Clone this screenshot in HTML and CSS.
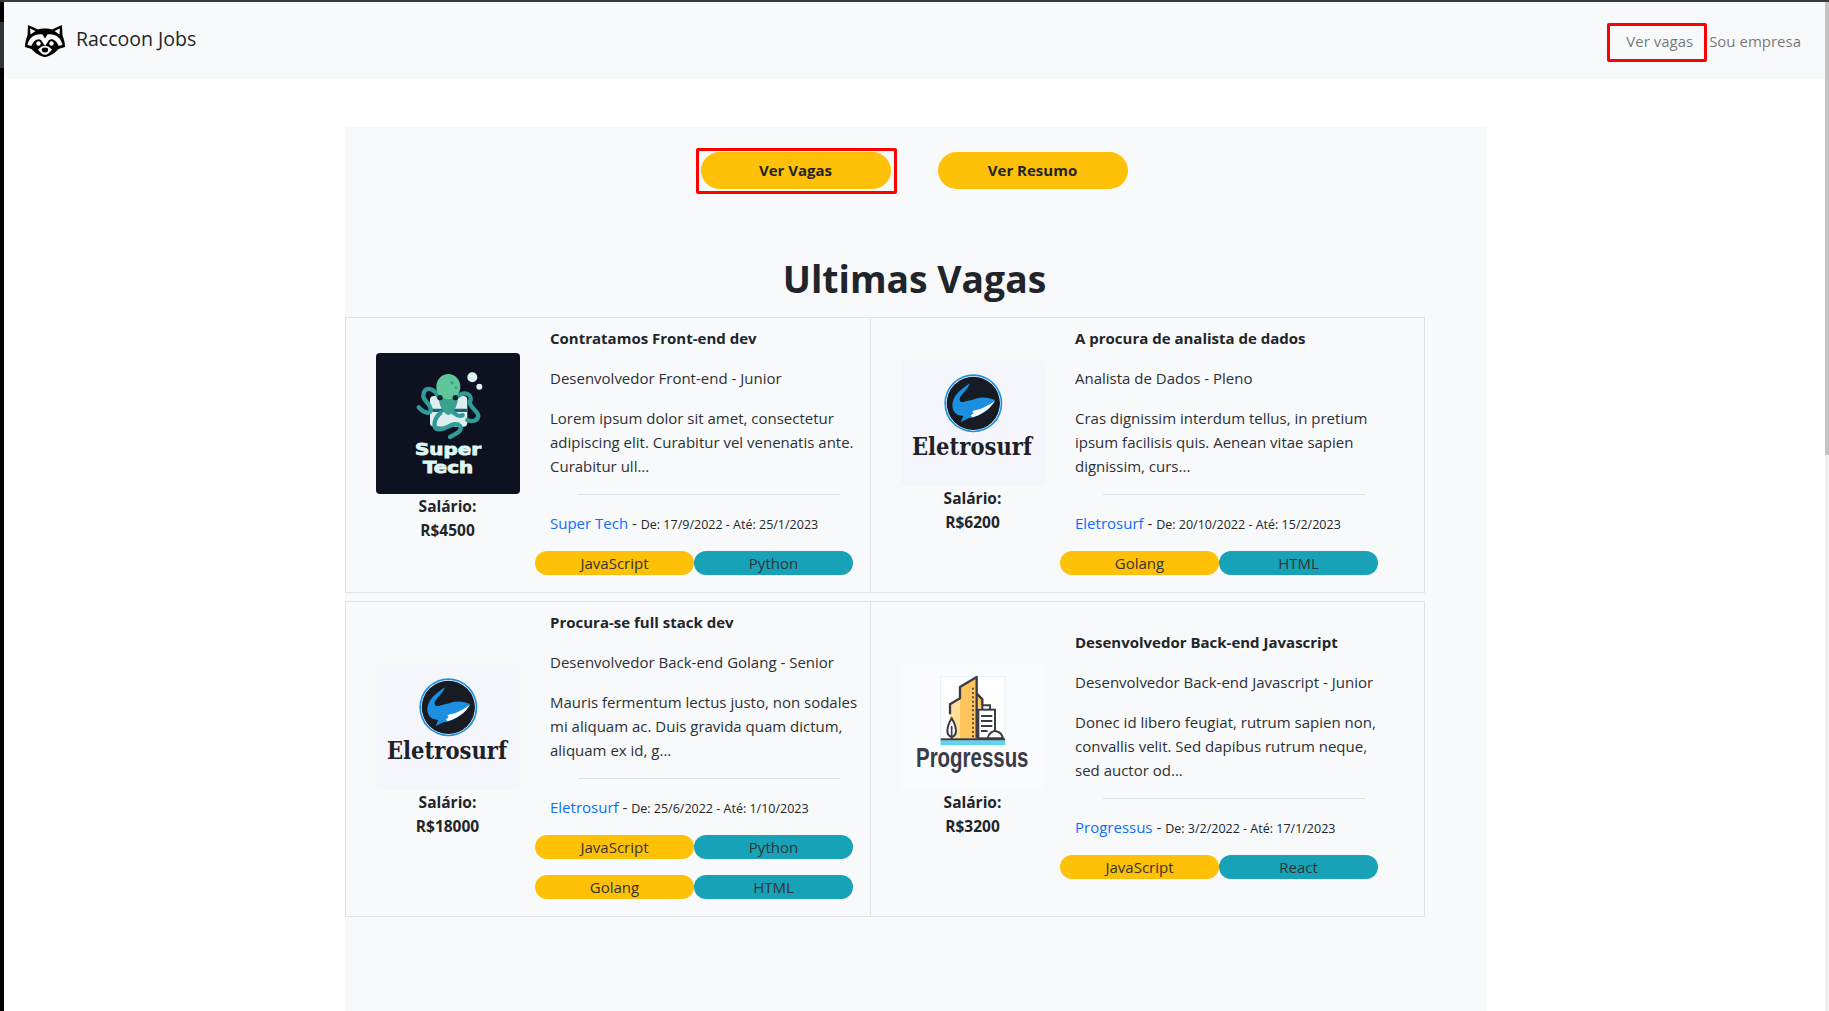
FILE: index.html
```html
<!DOCTYPE html>
<html lang="pt-BR">
<head>
    <meta charset="UTF-8">
    <meta name="viewport" content="width=device-width, initial-scale=1.0">
    <title>Raccoon Jobs</title>
    <link rel="stylesheet" href="styles.css">
</head>
<body>
    <svg class="sprite" xmlns="http://www.w3.org/2000/svg">
        <symbol id="logo-eletrosurf" viewBox="0 0 144 126">
            <rect width="144" height="126" rx="5" fill="#f5f6fb"/>
            <g transform="scale(.3333) translate(-18,-12)">
                <circle cx="235" cy="142" r="87" fill="#1c8fe0"/>
                <circle cx="235" cy="142" r="82" fill="#fff"/>
                <circle cx="235" cy="142" r="80" fill="#171b24"/>
                <path fill="#1c8fe0" d="M225 82C210 92 190 105 178 125C168 145 170 167 190 177L205 180L197 198L222 186L232 185C258 178 288 160 300 132C282 124 262 122 246 127C232 133 218 134 208 137C194 142 190 130 198 120C207 108 218 100 225 82Z"/>
                <path fill="#fff" d="M300 134C285 160 258 176 232 184L228 178L236 172L232 165L254 160C268 154 285 146 300 134Z"/>
            </g>
            <text class="logo-slab" x="11" y="95" textLength="120" lengthAdjust="spacingAndGlyphs">Eletrosurf</text>
        </symbol>
    </svg>

    <div class="left-edge"></div>

    <div class="page">
        <nav class="navbar">
            <a class="brand" href="#">
                <svg class="brand-logo" viewBox="0 0 40 32">
                    <path fill="#000" d="M3 0L13 4.500C17 3.300 23 3.300 27 4.500L37 0L37.500 10.500C39 14 40 18 40 22L33.500 24C30 28 25 31.500 20 32C15 31.500 10 28 6.500 24L0 22C0 18 1 14 2.500 10.500Z"/>
                    <path fill="#fff" d="M5 3.500L10.500 6L5.500 9.500ZM35 3.500L29.500 6L34.500 9.500Z"/>
                    <path fill="#fff" d="M2.500 20C4 12 11 8 17.500 9.500L20 13.500L22.500 9.500C29 8 36 12 37.500 20L33.500 20.800C31.500 15 27 13 24 15L20 21L16 15C13 13 8.500 15 6.500 20.800Z"/>
                    <path fill="#fff" d="M15.500 22.500C17 20.500 23 20.500 24.500 22.500L27 24.500C25 27.500 22.500 29.800 20 29.800C17.500 29.800 15 27.500 13 24.500Z"/>
                    <circle cx="13.500" cy="18.500" r="2.200" fill="#fff"/>
                    <circle cx="26.500" cy="18.500" r="2.200" fill="#fff"/>
                    <ellipse cx="20" cy="25" rx="3.200" ry="2.400" fill="#000"/>
                </svg>
                <span class="brand-name">Raccoon Jobs</span>
            </a>
            <div class="nav-links">
                <a class="nav-link nav-link-marked" href="#">Ver vagas</a>
                <a class="nav-link" href="#">Sou empresa</a>
            </div>
        </nav>

        <main class="panel">
            <div class="actions">
                <span class="marked"><a class="btn-action" href="#">Ver Vagas</a></span>
                <a class="btn-action btn-resumo" href="#">Ver Resumo</a>
            </div>

            <h1 class="title">Ultimas Vagas</h1>

            <div class="job-row">
                <article class="job-card job-card-left">
                    <div class="job-side">
                        <svg class="job-logo job-logo-tall" viewBox="0 0 144 141">
                            <rect width="144" height="141" rx="4" fill="#0d1120"/>
                            <g transform="scale(.3333) translate(-18,-21)">
                                <circle cx="307" cy="94" r="15" fill="#dff5f2"/>
                                <circle cx="328" cy="122" r="9" fill="#dff5f2"/>
                                <rect x="180" y="150" width="112" height="92" rx="12" fill="#dcefee"/>
                                <path fill="#1f5f78" d="M180 188H292V198H180Z"/>
                                <g fill="none" stroke="#2f9c9a" stroke-width="13" stroke-linecap="round">
                                    <path d="M205 152C190 122 160 120 160 150C160 165 178 170 182 188C185 205 165 205 146 184"/>
                                    <path d="M262 152C285 132 310 147 300 167C295 182 325 195 325 210C322 226 305 228 292 222"/>
                                    <path d="M212 200C192 218 186 246 205 250C228 254 252 222 270 240C280 255 255 265 240 273"/>
                                    <path d="M250 200C262 210 268 212 278 208"/>
                                </g>
                                <path fill="#3aa08f" d="M205 150C208 178 215 198 235 208C255 198 262 178 265 150Z"/>
                                <ellipse cx="235" cy="122" rx="36" ry="38" fill="#5fc79a"/>
                                <circle cx="246" cy="110" r="5" fill="#3aa08f"/>
                                <circle cx="258" cy="125" r="4" fill="#3aa08f"/>
                                <circle cx="210" cy="155" r="8" fill="#10202c"/>
                                <circle cx="256" cy="155" r="8" fill="#10202c"/>
                            </g>
                            <text class="logo-heavy" text-anchor="middle"><tspan x="72" y="102" textLength="66" lengthAdjust="spacingAndGlyphs">Super</tspan><tspan x="72" y="120" textLength="50" lengthAdjust="spacingAndGlyphs">Tech</tspan></text>
                        </svg>
                        <p class="salary">Salário:<br>R$4500</p>
                    </div>
                    <div class="job-body">
                        <div class="job-text">
                            <p class="job-title">Contratamos Front-end dev</p>
                            <p>Desenvolvedor Front-end - Junior</p>
                            <p>Lorem ipsum dolor sit amet, consectetur<br>adipiscing elit. Curabitur vel venenatis ante.<br>Curabitur ull...</p>
                            <hr class="divider">
                            <p class="job-meta"><a class="company" href="#">Super Tech</a> - <small>De: 17/9/2022 - Até: 25/1/2023</small></p>
                        </div>
                        <div class="tags">
                            <span class="tag tag-yellow">JavaScript</span>
                            <span class="tag tag-teal">Python</span>
                        </div>
                    </div>
                </article>

                <article class="job-card job-card-right">
                    <div class="job-side">
                        <svg class="job-logo"><use href="#logo-eletrosurf"/></svg>
                        <p class="salary">Salário:<br>R$6200</p>
                    </div>
                    <div class="job-body">
                        <div class="job-text">
                            <p class="job-title">A procura de analista de dados</p>
                            <p>Analista de Dados - Pleno</p>
                            <p>Cras dignissim interdum tellus, in pretium<br>ipsum facilisis quis. Aenean vitae sapien<br>dignissim, curs...</p>
                            <hr class="divider">
                            <p class="job-meta"><a class="company" href="#">Eletrosurf</a> - <small>De: 20/10/2022 - Até: 15/2/2023</small></p>
                        </div>
                        <div class="tags">
                            <span class="tag tag-yellow">Golang</span>
                            <span class="tag tag-teal">HTML</span>
                        </div>
                    </div>
                </article>
            </div>

            <div class="job-row">
                <article class="job-card job-card-left">
                    <div class="job-side">
                        <svg class="job-logo"><use href="#logo-eletrosurf"/></svg>
                        <p class="salary">Salário:<br>R$18000</p>
                    </div>
                    <div class="job-body">
                        <div class="job-text">
                            <p class="job-title">Procura-se full stack dev</p>
                            <p>Desenvolvedor Back-end Golang - Senior</p>
                            <p>Mauris fermentum lectus justo, non sodales<br>mi aliquam ac. Duis gravida quam dictum,<br>aliquam ex id, g...</p>
                            <hr class="divider">
                            <p class="job-meta"><a class="company" href="#">Eletrosurf</a> - <small>De: 25/6/2022 - Até: 1/10/2023</small></p>
                        </div>
                        <div class="tags">
                            <span class="tag tag-yellow">JavaScript</span>
                            <span class="tag tag-teal">Python</span>
                            <span class="tag tag-yellow">Golang</span>
                            <span class="tag tag-teal">HTML</span>
                        </div>
                    </div>
                </article>

                <article class="job-card job-card-right">
                    <div class="job-side">
                        <svg class="job-logo" viewBox="0 0 144 126">
                            <rect width="144" height="126" rx="5" fill="#fafbfc"/>
                            <g transform="scale(.3333) translate(-18,-9)">
                                <rect x="137" y="47" width="193" height="205" fill="#fff" stroke="#e1f1fc" stroke-width="3"/>
                                <path fill="#ffc55c" d="M165 235V130L195 112V78L245 48V97L262 115V140H248V235Z"/>
                                <path fill="#ffdf95" d="M165 235V130L195 112V235Z"/>
                                <path fill="none" stroke="#3b3b47" stroke-width="7" stroke-linejoin="round" d="M165 160V130L195 112V78L245 48V232M245 97L262 115V132"/>
                                <path fill="none" stroke="#3b3b47" stroke-width="5" stroke-dasharray="6 7" d="M234 80V232"/>
                                <rect x="250" y="146" width="50" height="86" fill="#fff" stroke="#3b3b47" stroke-width="6"/>
                                <path fill="none" stroke="#3b3b47" stroke-width="6" d="M262 146V133H285V146M258 165H292M258 180H292M258 195H292M258 210H278"/>
                                <path fill="#fff" stroke="#3b3b47" stroke-width="6" d="M278 232C280 218 295 205 308 212C320 215 322 225 324 232Z"/>
                                <path fill="#fff" stroke="#3b3b47" stroke-width="6" d="M170 172C156 195 150 224 170 228C190 224 184 195 170 172Z"/>
                                <path fill="none" stroke="#3b3b47" stroke-width="5" d="M170 195V234"/>
                                <rect x="137" y="238" width="193" height="14" fill="#5bd5f0"/>
                                <rect x="137" y="232" width="193" height="6" fill="#3b3b47"/>
                            </g>
                            <text class="logo-narrow" transform="translate(15 103) scale(.75 1)" textLength="150" lengthAdjust="spacingAndGlyphs">Progressus</text>
                        </svg>
                        <p class="salary">Salário:<br>R$3200</p>
                    </div>
                    <div class="job-body">
                        <div class="job-text">
                            <p class="job-title">Desenvolvedor Back-end Javascript</p>
                            <p>Desenvolvedor Back-end Javascript - Junior</p>
                            <p>Donec id libero feugiat, rutrum sapien non,<br>convallis velit. Sed dapibus rutrum neque,<br>sed auctor od...</p>
                            <hr class="divider">
                            <p class="job-meta"><a class="company" href="#">Progressus</a> - <small>De: 3/2/2022 - Até: 17/1/2023</small></p>
                        </div>
                        <div class="tags">
                            <span class="tag tag-yellow">JavaScript</span>
                            <span class="tag tag-teal">React</span>
                        </div>
                    </div>
                </article>
            </div>
        </main>
    </div>

    <div class="scrollbar"><div class="scrollbar-thumb"></div></div>
</body>
</html>
```

FILE: styles.css
```css
* {
    box-sizing: border-box;
}
html, body {
    margin: 0;
    height: 100%;
    overflow: hidden;
}
body {
    display: flex;
    border-top: 2px solid #38393b;
    background: #fff;
    color: #2c3035;
    font-family: "Open Sans", "Noto Sans", Arial, sans-serif;
    font-size: 15px;
    line-height: 24px;
}
a {
    text-decoration: none;
}
p {
    margin: 0 0 16px;
}
small {
    font-size: 12.5px;
    color: #212529;
}
.sprite {
    display: none;
}
.left-edge {
    width: 4px;
    flex: none;
    background: linear-gradient(#000 20px, #333 20px, #333 66px, #000 66px);
}
.page {
    flex: 1;
    min-width: 0;
}
.scrollbar {
    width: 4px;
    background: #f1f1f1;
}
.scrollbar-thumb {
    height: 453px;
    background: #c4c4c4;
}

/* navbar */
.navbar {
    display: flex;
    justify-content: space-between;
    align-items: center;
    height: 77px;
    padding: 0 22px 0 21px;
    background: #f8f9fa;
}
.brand {
    display: flex;
    align-items: center;
    gap: 11px;
    color: #212529;
    font-size: 19.5px;
}
.brand-logo {
    width: 40px;
    height: 32px;
}
.brand-name {
    margin-bottom: 4px;
}
.nav-links {
    display: flex;
    align-items: flex-start;
    margin-top: 4px;
}
.nav-link {
    padding: 6px 2px 0;
    color: rgba(0, 0, 0, .55);
}
.nav-link-marked {
    display: block;
    height: 39px;
    padding: 3px 11px 0 16px;
    border: 3px solid #f00;
    border-radius: 2px;
}

/* main panel */
.panel {
    width: 1141px;
    height: 900px;
    margin: 48px 0 0 341px;
    padding-top: 21px;
    background: #f8f9fa;
}
.actions {
    display: flex;
    justify-content: center;
    align-items: flex-start;
    gap: 41px;
    padding-right: 8px;
}
.marked {
    display: block;
    padding: 1px 3px 2px 2px;
    border: 3px solid #f00;
    border-radius: 2px;
}
.btn-action {
    display: block;
    width: 190px;
    height: 37px;
    border-radius: 20px;
    background: #ffc107;
    color: #212529;
    font-weight: 700;
    line-height: 37px;
    text-align: center;
}
.btn-resumo {
    margin-top: 4px;
}
.title {
    margin: 61px 0 14px;
    padding-right: 2px;
    color: #212529;
    font-size: 37.3px;
    font-weight: 700;
    line-height: 48px;
    text-align: center;
}

/* job cards */
.job-row {
    display: flex;
    margin-bottom: 8px;
}
.job-card {
    display: flex;
    align-items: center;
    border: 1px solid #dee2e6;
}
.job-card-left {
    width: 526px;
}
.job-card-right {
    width: 555px;
    margin-left: -1px;
}
.job-side {
    width: 175px;
    margin-left: 14px;
    text-align: center;
}
.job-logo {
    display: block;
    width: 144px;
    height: 126px;
    margin: 0 auto;
}
.job-logo-tall {
    height: 141px;
}
.salary {
    color: #212529;
    font-size: 15.500px;
    font-weight: 700;
}
.job-body {
    width: 333px;
    flex: none;
    padding-top: 8px;
}
.job-text {
    padding-left: 15px;
}
.job-title {
    color: #212529;
    font-weight: 700;
}
.divider {
    width: 262px;
    height: 1px;
    margin: 16px auto;
    border: 0;
    background: #dee2e6;
}
.job-meta {
    margin-bottom: 14px;
}
.company {
    color: #0d6efd;
}
.tags {
    display: flex;
    flex-wrap: wrap;
    width: 318px;
    padding-bottom: 1px;
}
.tag {
    width: 159px;
    height: 24px;
    margin-bottom: 16px;
    border-radius: 12px;
    color: #333;
    text-align: center;
}
.tag-yellow {
    background: #ffc107;
}
.tag-teal {
    background: #17a2b8;
}

/* logos */
.logo-slab {
    font-family: "DejaVu Serif", serif;
    font-size: 25px;
    font-weight: 700;
    fill: #1f2128;
}
.logo-heavy {
    font-family: "DejaVu Sans", sans-serif;
    font-size: 15.4px;
    font-weight: 700;
    fill: #dff5f2;
    stroke: #dff5f2;
    stroke-width: .9px;
}
.logo-narrow {
    font-family: "Liberation Sans", sans-serif;
    font-size: 28px;
    font-weight: 700;
    fill: #3b3b47;
}
```
